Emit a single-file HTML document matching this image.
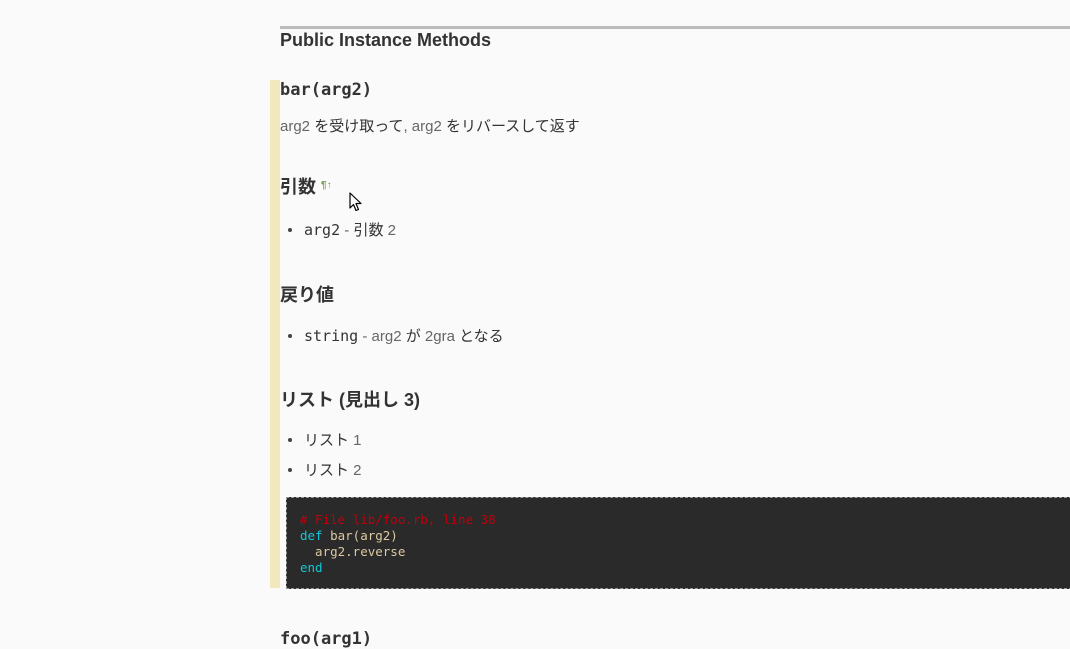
<!DOCTYPE html>
<html><head><meta charset="utf-8"><style>
body{margin:0;width:1070px;height:642px;background:#fafafa;overflow:hidden;position:relative;font-family:"Liberation Sans","Noto Sans CJK JP",sans-serif;color:#333}
.a{position:absolute;white-space:nowrap}
.rule{left:280px;top:26px;width:790px;height:3px;background:#bbb}
.bar{left:270px;top:80px;width:10px;height:508px;background:#f1e9bd}
h3{font-weight:bold;font-size:18px;margin:0}
.m{font-family:"DejaVu Sans Mono",monospace}
.g{color:#666}
.li{font-size:15px}
.li:before{content:"";position:absolute;left:-16px;top:9px;width:4px;height:4px;border-radius:50%;background:#444}
pre{margin:0;position:absolute;left:286px;top:497px;width:786px;height:92px;background:#2a2a2a;border:1px dashed #999;font-family:"DejaVu Sans Mono",monospace;font-size:12.5px;line-height:16px;color:#dcc9a0;box-sizing:border-box;padding:14px 0 0 13px}
.c{color:#c0000a}.k{color:#10c8d8}
</style></head><body>
<div class="a rule"></div>
<div class="a" style="left:280px;top:30px;font-weight:bold;font-size:18px">Public Instance Methods</div>
<div class="a bar"></div>
<div class="a m" style="left:280px;top:80px;font-weight:bold;font-size:17px">bar(arg2)</div>
<div class="a" style="left:280px;top:115px;font-size:15px"><span class="g">arg2</span> を受け取って<span class="g">, arg2</span> をリバースして返す</div>
<h3 class="a" style="left:280px;top:173px">引数 <span style="font-size:10px;color:#7a9a50;vertical-align:5px">¶↑</span></h3>
<svg class="a" style="left:349px;top:192px" width="14" height="20" viewBox="0 0 14 20"><path d="M1 1 L1 16 L4.5 12.5 L7 18.5 L9.5 17.5 L7 11.5 L12 11.5 Z" fill="#fff" stroke="#000" stroke-width="1.2" stroke-linejoin="round"/></svg>
<div class="a li" style="left:304px;top:219px"><span class="m">arg2</span> <span class="g">-</span> 引数 <span class="g">2</span></div>
<h3 class="a" style="left:280px;top:281px">戻り値</h3>
<div class="a li" style="left:304px;top:325px"><span class="m">string</span> <span class="g">- arg2</span> が <span class="g">2gra</span> となる</div>
<h3 class="a" style="left:280px;top:386px">リスト (見出し 3)</h3>
<div class="a li" style="left:304px;top:429px">リスト <span class="g">1</span></div>
<div class="a li" style="left:304px;top:459px">リスト <span class="g">2</span></div>
<pre><span class="c"># File lib/foo.rb, line 38</span>
<span class="k">def</span> bar(arg2)
  arg2.reverse
<span class="k">end</span></pre>
<div class="a m" style="left:280px;top:629px;font-weight:bold;font-size:17px">foo(arg1)</div>
</body></html>
